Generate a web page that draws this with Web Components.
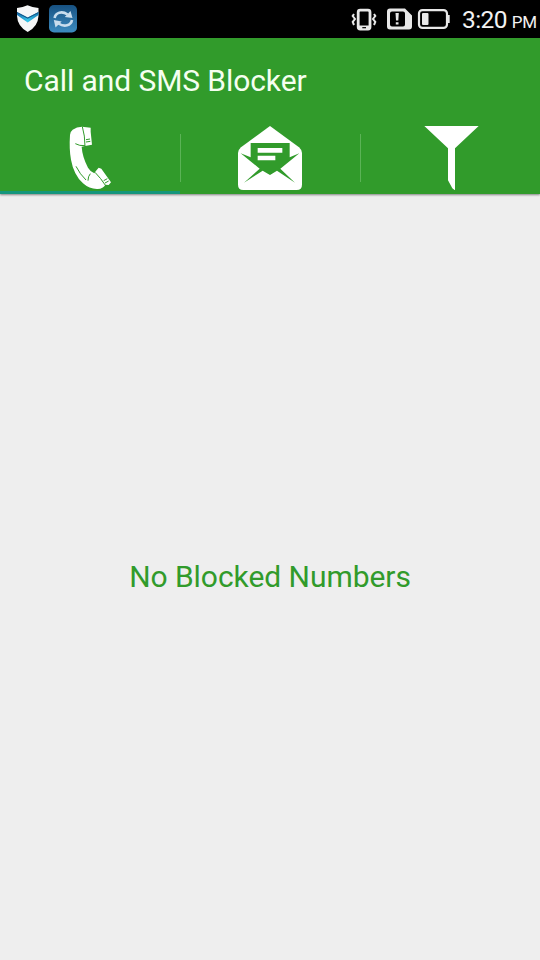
<!DOCTYPE html>
<html lang="en">
<head>
<meta charset="utf-8">
<title>Call and SMS Blocker</title>
<style>
  html, body {
    height: 100%;
    margin: 0;
  }

  body {
    font-family: Roboto, "Noto Sans", sans-serif;
    background-color: #eeeeee;
    overflow: hidden;
  }
</style>
</head>
<body>
<blocker-app></blocker-app>

<script>
const templateStatus = document.createElement("template");

templateStatus.innerHTML = `
    <style>
      :host {
        display: flex;
        align-items: flex-start;
        height: 38px;
        background-color: #000;
        color: #f2f2f2;
      }

      svg {
        display: block;
        height: 38px;
      }

      .status__right {
        display: flex;
        margin-left: auto;
      }

      .status__time {
        display: flex;
        align-items: baseline;
        gap: 5px;
        padding: 0 3px 0 10px;
        font-size: 24.5px;
        line-height: 40px;
        letter-spacing: -0.6px;
        white-space: nowrap;
      }

      .status__meridiem {
        font-size: 17px;
        letter-spacing: -0.2px;
      }
    </style>
    <svg width="90" viewBox="0 0 90 38">
      <defs>
        <linearGradient id="sync" x1="0" y1="0" x2="0" y2="1">
          <stop offset="0" stop-color="#175181"/>
          <stop offset="1" stop-color="#3d8cc0"/>
        </linearGradient>
        <linearGradient id="band" x1="0" y1="0" x2="1" y2="0">
          <stop offset="0" stop-color="#186fae"/>
          <stop offset="0.5" stop-color="#35c5e8"/>
          <stop offset="1" stop-color="#1880b8"/>
        </linearGradient>
      </defs>
      <path fill="#f5f6f7" d="M17 8Q23 7.500 27.500 5.300Q32 7.500 38.500 8V16Q38 26.500 27.700 32Q17.500 26.500 17 16Z"/>
      <path fill="url(#band)" d="M17 12L27.700 17.500L38.500 12V15L27.700 22.500L17 15Z"/>
      <path fill="#145386" d="M17 12L27.700 17.500L38.500 12V13L27.700 18.700L17 13Z"/>
      <rect x="49" y="5" width="28" height="27.500" rx="5" fill="url(#sync)"/>
      <g fill="none" stroke="#c9dded" stroke-width="2.600">
        <path d="M54.600 18C55.500 12.500 62 10.500 67.500 14.500"/>
        <path d="M72 20C71 25.500 64.500 27.500 58.500 23.500"/>
      </g>
      <path fill="#c9dded" d="M70.500 11L72.500 18L64.800 17ZM55.500 27.500L53.800 20L61.700 21.500Z"/>
    </svg>
    <div class="status__right">
      <svg width="102" viewBox="350 0 102 38">
        <g fill="none" stroke="#e8e8e8" stroke-width="2">
          <path d="M354 14L352.700 16L355 19L352.700 22L354 25M374 14L375.300 16L373 19L375.300 22L374 25"/>
          <rect x="358.200" y="10.200" width="11.800" height="18.800" rx="2" stroke-width="2.800"/>
        </g>
        <path fill="#e8e8e8" d="M358 25.500H370V29H358Z"/>
        <path fill="#111" d="M362.300 27H366V28.300H362.300Z"/>
        <path fill="#e8e8e8" fill-rule="evenodd" d="M390 8.500H405L412 15.500V26.500Q412 29.500 409 29.500H390Q387 29.500 387 26.500V11.500Q387 8.500 390 8.500ZM392 11.500Q390 11.500 390 13.500V24.500Q390 26.500 392 26.500H403Q405 26.500 405 24.500V13.500Q405 11.500 403 11.500Z"/>
        <path fill="#e8e8e8" d="M395.500 13H398.800L398.300 20.500H396ZM395.800 22.300H398.500V24.600H395.800Z"/>
        <rect x="419" y="10.100" width="28" height="17.800" rx="3.500" fill="none" stroke="#e8e8e8" stroke-width="2.200"/>
        <rect x="422" y="13" width="6.500" height="12" rx="1" fill="#e8e8e8"/>
        <path fill="#e8e8e8" d="M448 15H449.700V23H448Z"/>
      </svg>
      <div class="status__time"><span>3:20</span><span class="status__meridiem">PM</span></div>
    </div>
`;

class StatusBar extends HTMLElement {
  constructor() {
    super();
    this.attachShadow({ mode: "open" });
    this.shadowRoot.appendChild(templateStatus.content.cloneNode(true));
  }
}

window.customElements.define("status-bar", StatusBar);

const templateTab = document.createElement("template");

templateTab.innerHTML = `
    <style>
      :host {
        display: flex;
        flex: 1;
        align-items: center;
        justify-content: center;
        box-sizing: border-box;
        height: 72px;
        cursor: pointer;
        background: linear-gradient(#5bb356, #5bb356) left center / var(--divider, 0px) 48px no-repeat;
      }

      :host([active]) {
        box-shadow: inset 0 -3px #15967c;
      }

      ::slotted(svg) {
        display: block;
        width: 64px;
        height: 64px;
      }
    </style>
    <slot></slot>
`;

class TabItem extends HTMLElement {
  constructor() {
    super();
    this.attachShadow({ mode: "open" });
    this.shadowRoot.appendChild(templateTab.content.cloneNode(true));
  }
}

window.customElements.define("tab-item", TabItem);

const templateHeader = document.createElement("template");

templateHeader.innerHTML = `
    <style>
      :host {
        display: block;
        background-color: #319b2b;
        color: #f5fff0;
        box-shadow: 0 1px 2px rgba(0, 0, 0, 0.45);
      }

      .header__title {
        height: 84px;
        margin: 0;
        padding: 0 24px;
        font-size: 30px;
        font-weight: 400;
        line-height: 86px;
        letter-spacing: -0.08px;
        white-space: nowrap;
      }

      .header__tabs {
        display: flex;
      }
    </style>
    <h1 class="header__title"><slot name="title"></slot></h1>
    <div class="header__tabs"><slot></slot></div>
`;

class AppHeader extends HTMLElement {
  constructor() {
    super();
    this.attachShadow({ mode: "open" });
    this.shadowRoot.appendChild(templateHeader.content.cloneNode(true));
  }
}

window.customElements.define("app-header", AppHeader);

const templateEmpty = document.createElement("template");

templateEmpty.innerHTML = `
    <style>
      :host {
        display: flex;
        flex: 1;
        align-items: center;
        justify-content: center;
        padding-bottom: 1px;
        color: #319b2b;
        font-size: 30px;
        letter-spacing: -0.05px;
      }
    </style>
    <slot></slot>
`;

class EmptyMessage extends HTMLElement {
  constructor() {
    super();
    this.attachShadow({ mode: "open" });
    this.shadowRoot.appendChild(templateEmpty.content.cloneNode(true));
  }
}

window.customElements.define("empty-message", EmptyMessage);

const templateApp = document.createElement("template");

templateApp.innerHTML = `
    <style>
      :host {
        display: flex;
        flex-direction: column;
        height: 100vh;
        background-color: #eeeeee;
      }

      .divided {
        --divider: 1px;
      }
    </style>
    <status-bar></status-bar>
    <app-header>
      <span slot="title">Call and SMS Blocker</span>
      <tab-item active>
        <!-- phone -->
        <svg viewBox="-6 18 192 192">
          <path fill="#fff" d="M38 29Q50 20 66 20L92 23V35L96 74L75 78L65 80Q67 111 84 143Q91 155 103 160L107 154L116 143L124 146L153 187L146 195L136 194Q130 206 113 207Q89 208 69 190Q41 164 33 119Q27 87 30 45Q31 34 38 29Z"/>
          <g fill="none" stroke="#319b2b" stroke-width="3">
            <path d="M67 20Q75 47 75 79M46 71Q58 78 75 77M78 59L90 57M78 66L91 64M105 157Q122 174 137 197M131 182L142 176M135 189L146 183"/>
            <path d="M48 139Q60 163 78 180M84 182Q84 169 91 161"/>
          </g>
        </svg>
      </tab-item>
      <tab-item class="divided">
        <!-- open envelope -->
        <svg viewBox="39 24 192 192">
          <path fill="#fff" d="M135 24L222 88Q231 96 231 105V200Q231 216 215 216H55Q39 216 39 200V105Q39 96 48 88Z"/>
          <path fill="#319b2b" d="M77 75H194V118L223 106L166 152L210 194L156 158L135 171L113 158L57 194L104 152L47 106L77 118Z"/>
          <path fill="#fff" d="M98 90H172V104H98ZM98 113H151V127H98Z"/>
        </svg>
      </tab-item>
      <tab-item class="divided">
        <!-- funnel -->
        <svg viewBox="24 24 192 192">
          <path fill="#fff" d="M43 24H206L135 91V217L127 211L114 187V91Z"/>
        </svg>
      </tab-item>
    </app-header>
    <empty-message>No Blocked Numbers</empty-message>
`;

class BlockerApp extends HTMLElement {
  constructor() {
    super();
    this.attachShadow({ mode: "open" });
    this.shadowRoot.appendChild(templateApp.content.cloneNode(true));
  }
}

window.customElements.define("blocker-app", BlockerApp);
</script>
</body>
</html>
